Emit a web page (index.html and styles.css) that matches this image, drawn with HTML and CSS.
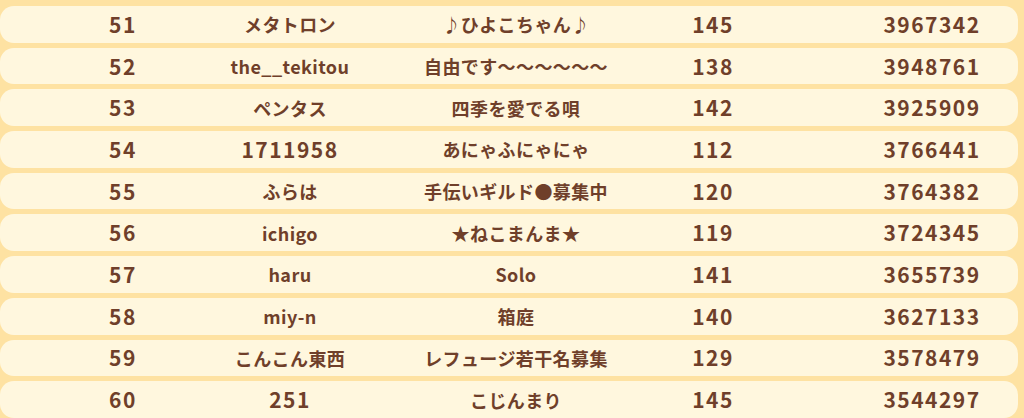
FILE: index.html
```html
<!DOCTYPE html>
<html lang="ja">
<head>
<meta charset="utf-8">
<link rel="stylesheet" href="styles.css">
</head>
<body>
<div class="board">
  <div class="row"><span class="rank num">51</span><span class="name">メタトロン</span><span class="guild">♪ひよこちゃん♪</span><span class="lv num">145</span><span class="score num">3967342</span></div>
  <div class="row"><span class="rank num">52</span><span class="name">the__tekitou</span><span class="guild">自由です〜〜〜〜〜〜</span><span class="lv num">138</span><span class="score num">3948761</span></div>
  <div class="row"><span class="rank num">53</span><span class="name">ペンタス</span><span class="guild">四季を愛でる唄</span><span class="lv num">142</span><span class="score num">3925909</span></div>
  <div class="row"><span class="rank num">54</span><span class="name num">1711958</span><span class="guild">あにゃふにゃにゃ</span><span class="lv num">112</span><span class="score num">3766441</span></div>
  <div class="row"><span class="rank num">55</span><span class="name">ふらは</span><span class="guild">手伝いギルド●募集中</span><span class="lv num">120</span><span class="score num">3764382</span></div>
  <div class="row"><span class="rank num">56</span><span class="name">ichigo</span><span class="guild">★ねこまんま★</span><span class="lv num">119</span><span class="score num">3724345</span></div>
  <div class="row"><span class="rank num">57</span><span class="name">haru</span><span class="guild">Solo</span><span class="lv num">141</span><span class="score num">3655739</span></div>
  <div class="row"><span class="rank num">58</span><span class="name">miy-n</span><span class="guild">箱庭</span><span class="lv num">140</span><span class="score num">3627133</span></div>
  <div class="row"><span class="rank num">59</span><span class="name">こんこん東西</span><span class="guild">レフュージ若干名募集</span><span class="lv num">129</span><span class="score num">3578479</span></div>
  <div class="row"><span class="rank num">60</span><span class="name num">251</span><span class="guild">こじんまり</span><span class="lv num">145</span><span class="score num">3544297</span></div>
</div>
</body>
</html>
```

FILE: styles.css
```css
html, body {
  margin: 0;
  padding: 0;
  background: #fee2a2;
  overflow: hidden;
}
body {
  font-family: "Noto Sans CJK JP", "Noto Sans", sans-serif;
  font-weight: 700;
  color: #6f3f2a;
  font-size: 18px;
}
.board {
  display: flex;
  flex-direction: column;
  gap: 5px;
  padding: 6px 6px 0 0;
}
.row {
  height: 36.7px;
  flex: none;
  background: #fff7de;
  border-radius: 14px;
  display: grid;
  grid-template-columns: 166px 168px 284px 110px 1fr 172px;
  align-items: center;
  padding-left: 40px;
  text-align: center;
  white-space: nowrap;
  line-height: 1;
}
.name, .guild {
  letter-spacing: 0.4px;
}
.num {
  font-size: 21px;
  letter-spacing: 1.5px;
}
.score {
  grid-column: 6;
}
```
